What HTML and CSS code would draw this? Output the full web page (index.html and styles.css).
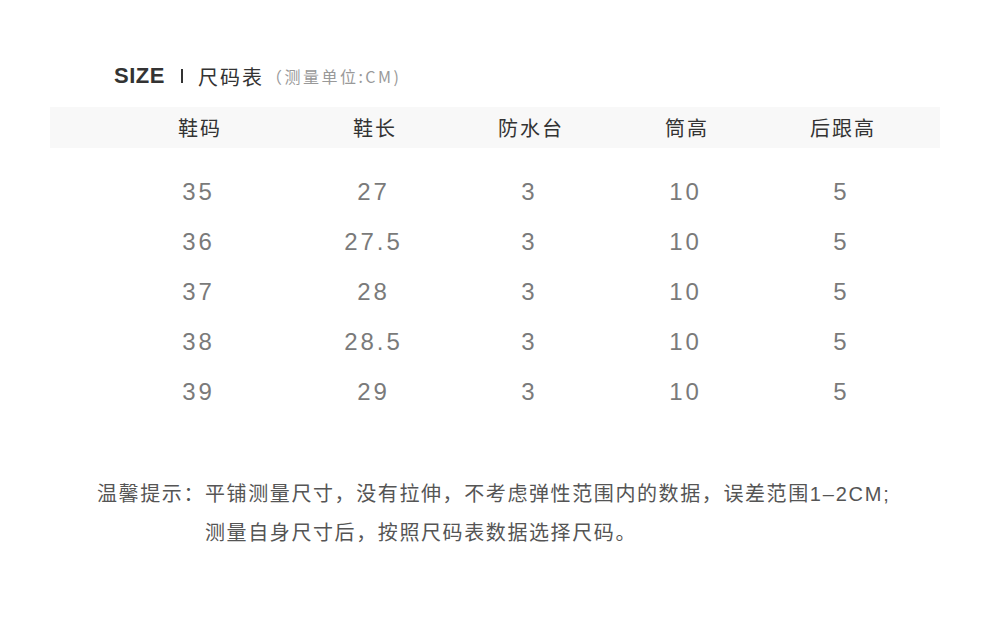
FILE: index.html
```html
<!DOCTYPE html>
<html lang="zh">
<head>
<meta charset="utf-8">
<title>尺码表</title>
<link rel="stylesheet" href="styles.css">
</head>
<body>
<div class="page">
  <div class="title">
    <span class="title-en">SIZE</span>
    <span class="title-bar"></span>
    <span class="title-cn">尺码表</span>
    <span class="title-note">（测量单位:CM)</span>
  </div>
  <div class="table">
    <div class="row head">
      <div class="cell c1">鞋码</div><div class="cell">鞋长</div><div class="cell">防水台</div><div class="cell">筒高</div><div class="cell">后跟高</div>
    </div>
    <div class="body">
      <div class="row data"><div class="cell c1">35</div><div class="cell">27</div><div class="cell">3</div><div class="cell">10</div><div class="cell">5</div></div>
      <div class="row data"><div class="cell c1">36</div><div class="cell">27.5</div><div class="cell">3</div><div class="cell">10</div><div class="cell">5</div></div>
      <div class="row data"><div class="cell c1">37</div><div class="cell">28</div><div class="cell">3</div><div class="cell">10</div><div class="cell">5</div></div>
      <div class="row data"><div class="cell c1">38</div><div class="cell">28.5</div><div class="cell">3</div><div class="cell">10</div><div class="cell">5</div></div>
      <div class="row data"><div class="cell c1">39</div><div class="cell">29</div><div class="cell">3</div><div class="cell">10</div><div class="cell">5</div></div>
    </div>
  </div>
  <div class="tips">
    <div class="tips-label">温馨提示：</div>
    <div class="tips-text">
      <div>平铺测量尺寸，没有拉伸，不考虑弹性范围内的数据，误差范围<span class="latin">1–2CM;</span></div>
      <div>测量自身尺寸后，按照尺码表数据选择尺码。</div>
    </div>
  </div>
</div>
</body>
</html>
```
FILE: styles.css
```css
html, body {
  margin: 0;
  padding: 0;
  background: #ffffff;
}
body {
  font-family: "Liberation Sans", "Noto Sans CJK SC", sans-serif;
  color: #333;
}
.page {
  width: 990px;
  height: 622px;
  padding: 61px 50px 0 50px;
  box-sizing: border-box;
}
.title {
  display: flex;
  align-items: center;
  height: 30px;
  padding-left: 64px;
}
.title-en {
  font-size: 22px;
  font-weight: bold;
  color: #333;
  letter-spacing: 0.5px;
}
.title-bar {
  width: 2px;
  height: 14px;
  background: #333;
  margin: 0 15px 0 16px;
}
.title-cn {
  font-family: "Noto Sans CJK SC", sans-serif;
  font-size: 20px;
  letter-spacing: 2px;
  color: #333;
}
.title-note {
  font-family: "Noto Sans CJK SC", sans-serif;
  font-size: 16px;
  letter-spacing: 2.5px;
  color: #999;
  margin-left: 2px;
}
.table {
  margin-top: 16px;
}
.row {
  display: grid;
  grid-template-columns: 175px repeat(4, 156px);
  padding-left: 72px;
  align-items: center;
}
.cell {
  text-align: center;
}
.c1 {
  padding-right: 19px;
}
.head {
  height: 41px;
  background: #f8f8f8;
  font-family: "Noto Sans CJK SC", sans-serif;
  font-size: 20px;
  letter-spacing: 2px;
  color: #333;
}
.body {
  padding-top: 19px;
}
.data {
  height: 50px;
  font-size: 24px;
  letter-spacing: 3px;
  color: #7a7a7a;
}
.data .cell {
  text-indent: -3px;
}
.tips {
  display: flex;
  margin-top: 57px;
  padding-left: 47px;
  font-family: "Noto Sans CJK SC", sans-serif;
  font-size: 20px;
  letter-spacing: 1.6px;
  line-height: 37px;
  color: #555;
}
.tips-label {
  flex: none;
}
.latin {
  font-family: "Liberation Sans", sans-serif;
  letter-spacing: 1.8px;
}
```
